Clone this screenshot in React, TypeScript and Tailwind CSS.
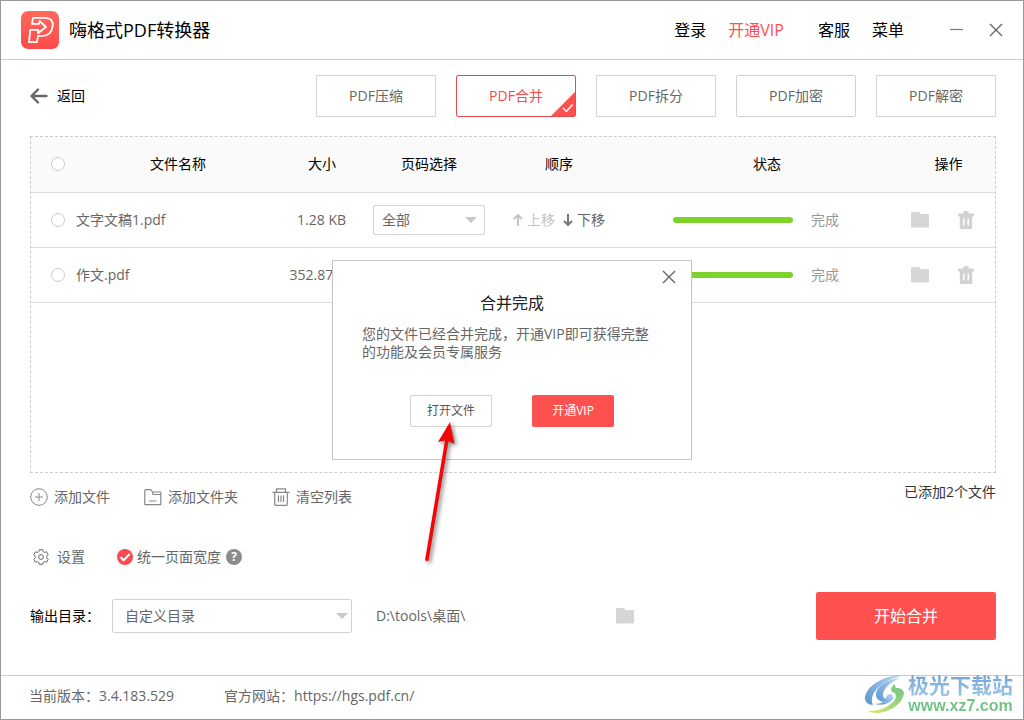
import React from "react";

function Logo() {
  return (
    <svg viewBox="0 0 38 38" className="size-[38px] shrink-0" aria-hidden="true">
      <defs>
        <linearGradient id="logoBg" x1="0" y1="0" x2="0" y2="1">
          <stop offset="0" stopColor="#ff6a5c" />
          <stop offset="1" stopColor="#ff4a4a" />
        </linearGradient>
      </defs>
      <rect width="38" height="38" rx="7" fill="url(#logoBg)" />
      <path
        d="M12 6.800H24.500c5 0 8 3.500 7.200 8.300-1 6-4.700 9.700-10 9.700h-4.700L16 31.200H8L9.300 18.800H17.300L17 22.300L25 16L18.500 10L18 12.800H11Z"
        fill="none"
        stroke="#fff"
        strokeWidth="1.800"
        strokeLinejoin="round"
      />
    </svg>
  );
}

function CloseIcon() {
  return (
    <svg viewBox="0 0 14 14" className="size-3.5" fill="none" stroke="#666" strokeWidth="1.400" aria-hidden="true">
      <path d="M1 1l12 12M13 1L1 13" />
    </svg>
  );
}

function FolderIcon() {
  return (
    <svg viewBox="0 0 18 16" className="h-4 w-[18px]" fill="#d6d6d6" aria-hidden="true">
      <path d="M1 0h6.500c.6 0 1 .3 1.200.8L9.300 2H17a1 1 0 0 1 1 1v11.500a1 1 0 0 1-1 1H1a1 1 0 0 1-1-1V1a1 1 0 0 1 1-1z" />
    </svg>
  );
}

function TrashIcon() {
  return (
    <svg viewBox="0 0 16 18" className="h-[18px] w-4" aria-hidden="true">
      <path
        fill="#d2d2d2"
        fillRule="evenodd"
        d="M5.500 0h5v2.500H15.500a.5.500 0 0 1 .5.500V5.500H14.200V17a1 1 0 0 1-1 1H2.800a1 1 0 0 1-1-1V5.500H0V3a.5.500 0 0 1 .5-.5h5zM5 7.500v7h1.500v-7zM9.500 7.500v7H11v-7z"
      />
    </svg>
  );
}

function MoveArrow({ down, faded }: { down?: boolean; faded?: boolean }) {
  return (
    <svg
      viewBox="0 0 10 12"
      className="h-3 w-2.5"
      fill="none"
      stroke={faded ? "#c4c4c4" : "#777"}
      strokeWidth="2"
      aria-hidden="true"
    >
      <path d={down ? "M5 0v11M1 7l4 4 4-4" : "M5 12V1M1 5l4-4 4 4"} />
    </svg>
  );
}

type DropdownProps = { label: string; value: string; id?: string; className: string; arrow: string };

function Dropdown({ label, value, id, className, arrow }: DropdownProps) {
  return (
    <div className={`relative ${className}`}>
      <select
        id={id}
        aria-label={label}
        defaultValue={value}
        className="size-full appearance-none rounded-xs border border-[#d2d2d2] bg-white pl-[inherit] text-sm text-[#666] outline-none"
      >
        <option>{value}</option>
      </select>
      <svg
        viewBox="0 0 12 6"
        className={`pointer-events-none absolute top-1/2 h-1.5 w-3 -translate-y-1/2 ${arrow}`}
        fill="#c8c8c8"
        aria-hidden="true"
      >
        <path d="M0 0h12L6 6z" />
      </svg>
    </div>
  );
}

function RoundCheck({ label }: { label: string }) {
  return (
    <input
      type="checkbox"
      aria-label={label}
      className="block size-3.5 appearance-none rounded-full border border-[#ccc] bg-white"
    />
  );
}

const tabs = ["PDF压缩", "PDF合并", "PDF拆分", "PDF加密", "PDF解密"];
const files = [
  { name: "文字文稿1.pdf", size: "1.28 KB" },
  { name: "作文.pdf", size: "352.87 B" },
];

function TitleBar() {
  return (
    <header className="flex h-[59px] shrink-0 items-center border-b border-[#ccc] px-5">
      <Logo />
      <h1 className="ml-2.5 flex-1 text-lg font-normal">嗨格式PDF转换器</h1>
      <nav className="flex items-center text-base">
        <button type="button">登录</button>
        <button type="button" className="ml-[22px] text-[#ff5050]">
          开通VIP
        </button>
        <button type="button" className="ml-[34px]">
          客服
        </button>
        <button type="button" className="ml-[22px]">
          菜单
        </button>
        <button type="button" aria-label="最小化" className="ml-[46px]">
          <svg viewBox="0 0 14 14" className="size-3.5" stroke="#777" strokeWidth="1.200" aria-hidden="true">
            <path d="M0 6.500h13" />
          </svg>
        </button>
        <button type="button" aria-label="关闭" className="ml-[25px]">
          <CloseIcon />
        </button>
      </nav>
    </header>
  );
}

function Tabs() {
  return (
    <div className="flex items-center justify-between">
      <button type="button" className="flex items-center gap-[9px] text-sm">
        <svg
          viewBox="0 0 18 16"
          className="h-4 w-[18px]"
          fill="none"
          stroke="#666"
          strokeWidth="2.400"
          strokeLinecap="round"
          strokeLinejoin="round"
          aria-hidden="true"
        >
          <path d="M16.500 8H2M8 1.500L1.500 8l6.500 6.500" />
        </svg>
        返回
      </button>
      <div className="flex gap-5">
        {tabs.map((tab, i) => (
          <button
            key={tab}
            type="button"
            className={
              i === 1
                ? "relative h-[42px] w-[120px] rounded-xs border border-[#e04a50] text-sm text-[#f04a50]"
                : "relative h-[42px] w-[120px] rounded-xs border border-[#d2d2d2] text-sm text-[#666]"
            }
          >
            {tab}
            {i === 1 && (
              <svg viewBox="0 0 24 24" className="absolute right-0 bottom-0 size-6" aria-hidden="true">
                <path d="M24 0v24H0z" fill="#ff5050" />
                <path d="M12 16l3.500 3.500 6-7" fill="none" stroke="#fff" strokeWidth="1.500" />
              </svg>
            )}
          </button>
        ))}
      </div>
    </div>
  );
}

function FileTable() {
  return (
    <section className="mt-[19px] flex-1 border border-dashed border-[#ccc]">
      <table className="w-full table-fixed text-sm text-[#666]">
        <colgroup>
          <col className="w-[45px]" />
          <col />
          <col className="w-[84px]" />
          <col className="w-[130px]" />
          <col className="w-[130px]" />
          <col className="w-[278px]" />
          <col className="w-[93px]" />
        </colgroup>
        <thead className="bg-[#fafafa] text-black">
          <tr className="h-[55px] border-b border-[#e0e0e0] *:font-normal">
            <th className="pl-5">
              <RoundCheck label="全选" />
            </th>
            <th>文件名称</th>
            <th>大小</th>
            <th>页码选择</th>
            <th>顺序</th>
            <th className="pl-2">状态</th>
            <th>操作</th>
          </tr>
        </thead>
        <tbody>
          {files.map((file, i) => (
            <tr key={file.name} className="h-[55px] border-b border-[#e0e0e0]">
              <td className="pl-5">
                <RoundCheck label={file.name} />
              </td>
              <td>{file.name}</td>
              <td className="pr-[18px] text-right whitespace-nowrap">{file.size}</td>
              <td>
                <Dropdown label="页码选择" value="全部" className="mx-auto h-[30px] w-28 pl-2 *:first:-ml-2 *:first:w-28" arrow="right-2" />
              </td>
              <td>
                <div className="flex items-center justify-center gap-2">
                  <button
                    type="button"
                    className={i === 0 ? "flex items-center gap-1 text-[#c4c4c4]" : "flex items-center gap-1"}
                  >
                    <MoveArrow faded={i === 0} />
                    上移
                  </button>
                  <button
                    type="button"
                    className={i === 1 ? "flex items-center gap-1 text-[#c4c4c4]" : "flex items-center gap-1"}
                  >
                    <MoveArrow down faded={i === 1} />
                    下移
                  </button>
                </div>
              </td>
              <td>
                <div className="flex items-center gap-[18px] pl-[49px] text-[#999]">
                  <div
                    role="progressbar"
                    aria-label={file.name}
                    aria-valuenow={100}
                    className="h-1.5 w-[120px] rounded-full bg-[#7ed32a]"
                  />
                  完成
                </div>
              </td>
              <td>
                <div className="flex items-center gap-[29px] pl-[9px]">
                  <button type="button" aria-label="打开文件夹">
                    <FolderIcon />
                  </button>
                  <button type="button" aria-label="删除">
                    <TrashIcon />
                  </button>
                </div>
              </td>
            </tr>
          ))}
        </tbody>
      </table>
    </section>
  );
}

function ListActions() {
  return (
    <div className="flex h-12 items-center text-sm text-[#666]">
      <button type="button" className="flex items-center gap-1.5">
        <svg viewBox="0 0 18 18" className="size-[18px]" fill="none" stroke="#888" aria-hidden="true">
          <circle cx="9" cy="9" r="8.300" />
          <path d="M5 9h8M9 5v8" />
        </svg>
        添加文件
      </button>
      <button type="button" className="ml-[34px] flex items-center gap-1.5">
        <svg viewBox="0 0 18 18" className="size-[18px]" fill="none" stroke="#888" strokeWidth="1.200" aria-hidden="true">
          <path d="M.8 16V2.500a.8.800 0 0 1 .8-.8h5L8.500 4H16a.8.800 0 0 1 .8.800V16a.6.600 0 0 1-.6.600H1.400A.6.600 0 0 1 .8 16zM8.500 4.500 9 6.500h7.500M5 13h7.500" />
        </svg>
        添加文件夹
      </button>
      <button type="button" className="ml-[34px] flex items-center gap-1.5">
        <svg viewBox="0 0 18 18" className="size-[18px]" fill="none" stroke="#888" strokeWidth="1.200" aria-hidden="true">
          <path d="M.5 4.300h17M4.500 4V.8h9V4M2.700 4.500V16.500c0 .5.300.8.800.8h11c.5 0 .8-.3.800-.8V4.500M6.500 7.500v6.500M9 7.500v6.500M11.500 7.500v6.500" />
        </svg>
        清空列表
      </button>
      <span className="ml-auto pb-2.5 text-[#333]">已添加2个文件</span>
    </div>
  );
}

function Options() {
  return (
    <div className="flex h-[71px] items-center text-sm text-[#666]">
      <button type="button" className="ml-[3px] flex items-center gap-2">
        <svg viewBox="0 0 16 16" className="size-4" fill="none" stroke="#666" strokeLinejoin="round" aria-hidden="true">
          <path d="M6.300.7h3.400l.5 2 1.300.7 2-.6 1.700 2.900L13.700 7.200v1.600l1.500 1.500-1.700 2.900-2-.6-1.300.7-.5 2H6.300l-.5-2-1.300-.7-2 .6L.8 10.300l1.500-1.500V7.200L.8 5.700l1.700-2.900 2 .6 1.300-.7z" />
          <circle cx="8" cy="8" r="2.400" />
        </svg>
        设置
      </button>
      <label className="ml-8 flex items-center gap-1">
        <span className="grid size-4 *:col-start-1 *:row-start-1">
          <input type="checkbox" defaultChecked className="size-4 appearance-none rounded-full bg-[#fa4b50]" />
          <svg viewBox="0 0 16 16" className="pointer-events-none size-4" fill="none" stroke="#fff" strokeWidth="2" aria-hidden="true">
            <path d="M3.500 8l3.200 3.200 6-6.200" />
          </svg>
        </span>
        统一页面宽度
      </label>
      <button
        type="button"
        aria-label="帮助"
        className="ml-[5px] flex size-4 items-center justify-center rounded-full bg-[#8c8c8c] text-xs font-bold text-white"
      >
        ?
      </button>
    </div>
  );
}

function OutputRow() {
  return (
    <div className="mb-[35px] flex h-12 items-center text-sm text-[#666]">
      <label htmlFor="output-dir" className="w-[82px] text-black">
        输出目录：
      </label>
      <Dropdown
        id="output-dir"
        label="输出目录"
        value="自定义目录"
        className="h-[34px] w-60 pl-3 *:first:-ml-3 *:first:w-60"
        arrow="right-1"
      />
      <span className="ml-6 w-60">D:\tools\桌面\</span>
      <button type="button" aria-label="浏览">
        <FolderIcon />
      </button>
      <button type="button" className="ml-auto h-12 w-[180px] rounded-xs bg-[#ff5050] text-base text-white">
        开始合并
      </button>
    </div>
  );
}

function MergeDialog() {
  return (
    <div className="pointer-events-none fixed inset-0 flex items-center justify-center">
      <div
        role="dialog"
        aria-labelledby="dialog-title"
        className="pointer-events-auto relative w-[360px] border border-[#c4c4c4] bg-white px-[29px] pt-8 pb-8"
      >
        <button type="button" aria-label="关闭" className="absolute top-[9px] right-[15px]">
          <CloseIcon />
        </button>
        <h2 id="dialog-title" className="text-center text-base leading-5 font-normal text-[#222]">
          合并完成
        </h2>
        <p className="mt-3 text-sm leading-[18px] text-[#666]">您的文件已经合并完成，开通VIP即可获得完整的功能及会员专属服务</p>
        <div className="mt-[34px] flex justify-center gap-10 text-xs">
          <button type="button" className="h-8 w-[82px] rounded-xs border border-[#d2d2d2] text-[#555]">
            打开文件
          </button>
          <button type="button" className="h-8 w-[82px] rounded-xs bg-[#ff5050] text-white">
            开通VIP
          </button>
        </div>
      </div>
      <svg
        viewBox="0 0 40 145"
        className="absolute top-[422px] left-[420px] h-[145px] w-10 drop-shadow-[2px_2px_2px_rgba(0,0,0,0.5)]"
        aria-hidden="true"
      >
        <path d="M30 0L34.500 22L28.500 19L8.500 139L5 138.500L25 18.500L18 20Z" fill="#f00808" />
      </svg>
    </div>
  );
}

function SiteMark() {
  return (
    <div className="absolute right-2.5 bottom-1 flex items-center opacity-85">
      <svg viewBox="0 0 44 40" className="h-10 w-11" aria-hidden="true">
        <defs>
          <linearGradient id="markBlue" x1="1" y1="0" x2="0" y2="1">
            <stop offset="0" stopColor="#a9d3f0" />
            <stop offset="1" stopColor="#3f82c8" />
          </linearGradient>
          <linearGradient id="markGreen" x1="1" y1="0" x2="0" y2="1">
            <stop offset="0" stopColor="#4db878" />
            <stop offset="1" stopColor="#dde650" />
          </linearGradient>
        </defs>
        <path d="M43 0C22-1 2 10 1 23c0 4 3 7 8 7C6 24 9 16 18 9 25 4 34 1 43 0z" fill="url(#markBlue)" />
        <path
          d="M36 3C22 4 12 12 12 20c0 4 4 7 9 7 3 0 5-1 7-3-4 1-9 0-9-4 0-6 7-13 17-17z"
          fill="url(#markBlue)"
        />
        <path d="M11 29c6 2 14 0 18-5 1-2 0-4-2-5-3 0-5 2-5 4 0 3-5 6-11 6z" fill="url(#markBlue)" />
        <path d="M31 9c-4 3-5 6-3 8 5 1 5 6 1 10C23 33 14 36 4 36c5 3 13 3 21-1 9-4 14-10 15-17-1-4-4-5-8-5-1-1-1-3-1-4z" fill="url(#markGreen)" />
      </svg>
      <div className="flex flex-col items-center">
        <span className="bg-linear-to-b from-[#5c94cc] to-[#8cbfe6] bg-clip-text text-[21px] leading-[23px] font-bold text-transparent">
          极光下载站
        </span>
        <span className="font-['Liberation_Sans',sans-serif] text-base leading-[18px] font-bold text-[#5cb874]">www.xz7.com</span>
      </div>
    </div>
  );
}

export default function App() {
  return (
    <div className="relative flex min-h-screen flex-col border border-[#999] bg-white font-['Open_Sans','Noto_Sans_CJK_SC',sans-serif] text-black">
      <TitleBar />
      <main className="flex flex-1 flex-col pt-[15px] pr-[27px] pl-[29px]">
        <Tabs />
        <FileTable />
        <ListActions />
        <Options />
        <OutputRow />
      </main>
      <footer className="flex h-11 shrink-0 items-center gap-[50px] border-t border-[#ccc] pb-1 pl-7 text-sm text-[#666]">
        <span>当前版本：3.4.183.529</span>
        <span>
          官方网站：<a href="https://hgs.pdf.cn/">https://hgs.pdf.cn/</a>
        </span>
      </footer>
      <SiteMark />
      <MergeDialog />
    </div>
  );
}
